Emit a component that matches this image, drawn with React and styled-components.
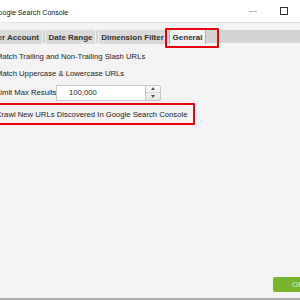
import React from 'react'
import styled, { createGlobalStyle } from 'styled-components'

const Global = createGlobalStyle`
  html, body { margin: 0; padding: 0; background: #f3f3f3; }
  body { width: 300px; height: 300px; overflow: hidden; }
`

const Window = styled.div`
  width: 340px;
  height: 300px;
  margin-left: -40px;
  display: flex;
  flex-direction: column;
  background: #f3f3f3;
  font-family: "Liberation Sans", Arial, sans-serif;
  font-size: 7.7px;
  color: #222;
  border-bottom: 2px solid #b2b2b2;
  box-sizing: border-box;
`

const TitleBar = styled.div`
  height: 18px;
  background: #fff;
  border-bottom: 1px solid #e2e2e2;
  display: flex;
  align-items: center;
  padding: 4px 1px 0 33px;
  font-size: 7.1px;
  color: #111;
`

const TitleText = styled.span`
  flex: 1;
  white-space: nowrap;
`

const WinButton = styled.div`
  width: 31px;
  height: 18px;
  display: flex;
  align-items: center;
  justify-content: center;
  margin-top: -4px;
`

const TabStrip = styled.div`
  margin-top: 6px;
  height: 15px;
  padding-left: 3px;
  display: flex;
  gap: 2px;
  background: linear-gradient(#f3f3f3 1px, #d4d4d4 1px, #d4d4d4 14px, #f3f3f3 14px);
`

const Tab = styled.div`
  position: relative;
  width: ${p => p.$w}px;
  height: 15px;
  box-sizing: border-box;
  display: flex;
  align-items: center;
  justify-content: ${p => (p.$end ? 'flex-end' : 'center')};
  padding: 0 3px;
  white-space: nowrap;
  font-weight: bold;
  font-size: 8px;
  color: #333;
  background: ${p => (p.$active ? '#f1f1f1' : '#d9d9d9')};
  border: 1px solid ${p => (p.$active ? '#9fd05f' : '#ececec')};
  border-bottom: none;
`

const Highlight = styled.div`
  position: absolute;
  left: -5px;
  top: -2px;
  width: 54px;
  height: 20px;
  box-sizing: border-box;
  border: 2px solid #e8000b;
  border-radius: 1px;
  pointer-events: none;
`

const Body = styled.div`
  flex: 1;
  display: flex;
  flex-direction: column;
  padding: 4px 0 0 36px;
`

const Row = styled.div`
  height: 16px;
  display: flex;
  align-items: center;
  white-space: nowrap;
  margin-top: ${p => p.$gap || 0}px;
`

const LimitRow = styled.div`
  height: 17px;
  margin-top: 3px;
  display: flex;
  align-items: center;
`

const Label = styled.span`
  width: 60px;
  white-space: nowrap;
`

const Input = styled.div`
  width: 89px;
  height: 16px;
  box-sizing: border-box;
  border: 1px solid #c9c9c9;
  border-right: none;
  background: #fff;
  display: flex;
  align-items: center;
  padding-left: 12px;
`

const Spinner = styled.div`
  width: 16px;
  height: 16px;
  box-sizing: border-box;
  border: 1px solid #c4c4c4;
  border-radius: 0 2px 2px 0;
  background: linear-gradient(#f8f8f8, #e6e6e6);
  display: flex;
  flex-direction: column;
`

const SpinHalf = styled.div`
  flex: 1;
  display: flex;
  align-items: center;
  justify-content: center;
  border-top: ${p => (p.$down ? '1px dotted #c8c8c8' : 'none')};
`

const Arrow = styled.div`
  width: 0;
  height: 0;
  border-left: 2.5px solid transparent;
  border-right: 2.5px solid transparent;
  ${p => (p.$down ? 'border-top: 3px solid #555;' : 'border-bottom: 3px solid #555;')}
`

const CrawlRow = styled(Row)`
  position: relative;
`

const Box = styled.div`
  position: absolute;
  left: -1px;
  top: -3px;
  width: 200px;
  height: 22px;
  box-sizing: border-box;
  border: 2px solid #e8000b;
  border-radius: 1px;
`

const Footer = styled.div`
  display: flex;
  justify-content: flex-end;
  padding-bottom: 6px;
`

const OkButton = styled.div`
  width: 27px;
  height: 15px;
  border-radius: 2px 0 0 2px;
  background: #78b52e;
  color: #dff0c9;
  display: flex;
  align-items: center;
  padding-left: 19px;
  box-sizing: border-box;
  white-space: nowrap;
  font-size: 8px;
`

export default function App() {
  return (
    <>
      <Global />
      <Window>
        <TitleBar>
          <TitleText>Google Search Console</TitleText>
          <WinButton>
            <svg width="8" height="8" viewBox="0 0 8 8">
              <line x1="0" y1="4.5" x2="8" y2="4.5" stroke="#b5b5b5" strokeWidth="1" />
            </svg>
          </WinButton>
          <WinButton>
            <svg width="8" height="8" viewBox="0 0 8 8">
              <rect x="0.5" y="0.5" width="7" height="7" fill="none" stroke="#333" strokeWidth="1" />
            </svg>
          </WinButton>
        </TitleBar>
        <TabStrip>
          <Tab $w={80} $end>Master Account</Tab>
          <Tab $w={51}>Date Range</Tab>
          <Tab $w={69}>Dimension Filter</Tab>
          <Tab $active $w={37}>
            General
            <Highlight />
          </Tab>
        </TabStrip>
        <Body>
          <Row>Match Trailing and Non-Trailing Slash URLs</Row>
          <Row $gap={1}>Match Uppercase &amp; Lowercase URLs</Row>
          <LimitRow>
            <Label>Limit Max Results</Label>
            <Input>100,000</Input>
            <Spinner>
              <SpinHalf><Arrow /></SpinHalf>
              <SpinHalf $down><Arrow $down /></SpinHalf>
            </Spinner>
          </LimitRow>
          <CrawlRow $gap={5}>
            <Box />
            Crawl New URLs Discovered In Google Search Console
          </CrawlRow>
        </Body>
        <Footer>
          <OkButton>OK</OkButton>
        </Footer>
      </Window>
    </>
  )
}
